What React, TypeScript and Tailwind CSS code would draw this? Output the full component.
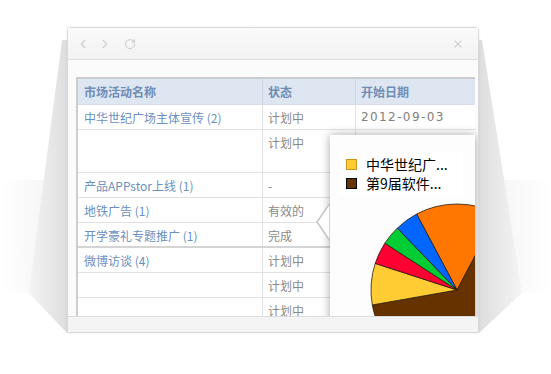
import { ChevronLeft, ChevronRight, RotateCw, X } from "lucide-react";

const rows = [
  { name: "中华世纪广场主体宣传 (2)", status: "计划中", date: "2012-09-03" },
  { name: "", status: "计划中", date: "", tall: true },
  { name: "产品APPstor上线 (1)", status: "-", date: "" },
  { name: "地铁广告 (1)", status: "有效的", date: "" },
  { name: "开学豪礼专题推广 (1)", status: "完成", date: "", thick: true },
  { name: "微博访谈 (4)", status: "计划中", date: "" },
  { name: "", status: "计划中", date: "" },
  { name: "", status: "计划中", date: "" },
];

const slices = [
  { color: "#ff7700", from: 332, to: 388 },
  { color: "#663300", from: 28, to: 260 },
  { color: "#ffcc33", from: 260, to: 288 },
  { color: "#ff0033", from: 288, to: 303 },
  { color: "#00cc33", from: 303, to: 316 },
  { color: "#0066ff", from: 316, to: 332 },
];

function slicePath(cx: number, cy: number, r: number, from: number, to: number) {
  const pt = (a: number) => {
    const rad = (a * Math.PI) / 180;
    return `${(cx + r * Math.sin(rad)).toFixed(2)} ${(cy - r * Math.cos(rad)).toFixed(2)}`;
  };
  const large = to - from > 180 ? 1 : 0;
  return `M ${cx} ${cy} L ${pt(from)} A ${r} ${r} 0 ${large} 1 ${pt(to)} Z`;
}

function Backdrop() {
  return (
    <svg className="absolute inset-0" width="551" height="374">
      <defs>
        <linearGradient id="shadeL" gradientUnits="userSpaceOnUse" x1="67" y1="0" x2="20" y2="0">
          <stop offset="0" stopColor="#dedede" />
          <stop offset="1" stopColor="#f9f9f9" />
        </linearGradient>
        <linearGradient id="shadeR" gradientUnits="userSpaceOnUse" x1="479" y1="0" x2="530" y2="0">
          <stop offset="0" stopColor="#dedede" />
          <stop offset="1" stopColor="#f9f9f9" />
        </linearGradient>
        <linearGradient id="floorL" gradientUnits="userSpaceOnUse" x1="67" y1="0" x2="0" y2="0">
          <stop offset="0" stopColor="#ececec" />
          <stop offset="1" stopColor="#ffffff" />
        </linearGradient>
        <linearGradient id="floorR" gradientUnits="userSpaceOnUse" x1="479" y1="0" x2="551" y2="0">
          <stop offset="0" stopColor="#ececec" />
          <stop offset="1" stopColor="#ffffff" />
        </linearGradient>
      </defs>
      <rect x="0" y="180" width="67" height="113" fill="url(#floorL)" opacity="0.7" />
      <rect x="479" y="180" width="72" height="113" fill="url(#floorR)" opacity="0.7" />
      <polygon points="62,40 29,293 67,333 67,40" fill="url(#shadeL)" />
      <polygon points="482,40 522,293 479,333 479,40" fill="url(#shadeR)" />
    </svg>
  );
}

function ChartPopover() {
  return (
    <div className="absolute left-[262px] top-[75px] h-[200px] w-[145px] bg-white shadow-[0_0_9px_rgba(0,0,0,0.35)]">
      <svg className="absolute left-[-14px] top-[68px]" width="16" height="38" viewBox="0 0 16 38">
        <polygon points="14,0 1,19 14,38" fill="#ffffff" stroke="#c4c4c4" strokeWidth="1.5" />
        <rect x="14" y="0" width="2" height="38" fill="#ffffff" />
      </svg>
      <div className="relative h-full w-full overflow-hidden bg-[#fdfdfd]">
        <svg className="absolute left-0 top-0" width="145" height="200">
          {slices.map((s) => (
            <path
              key={s.color}
              d={slicePath(127, 155, 86, s.from, s.to)}
              fill={s.color}
              stroke="#2a1a0a"
              strokeWidth="0.8"
              strokeLinejoin="round"
            />
          ))}
        </svg>
        <div className="relative ml-[10px] mt-[17px] flex h-[43px] w-[123px] flex-col justify-center gap-[4px] bg-white pl-[6px] font-['Noto_Sans_CJK_SC',sans-serif] text-[14px] leading-[15px] text-black">
          <div className="flex items-center gap-[9px]">
            <span className="h-[11px] w-[11px] border border-[#c9961a] bg-[#ffc933]" />
            <span>中华世纪广...</span>
          </div>
          <div className="flex items-center gap-[9px]">
            <span className="h-[11px] w-[11px] border border-black bg-[#663300]" />
            <span>第9届软件...</span>
          </div>
        </div>
      </div>
    </div>
  );
}

export default function App() {
  return (
    <div className="relative h-[374px] w-[551px] overflow-hidden bg-white">
      <Backdrop />
      <div className="relative ml-[67px] mt-[27px] flex h-[306px] w-[412px] flex-col rounded-t-[4px] border border-[#dadada] bg-white shadow-[0_0_3px_rgba(0,0,0,0.08)]">
        <div className="flex h-[32px] items-center border-b border-[#dedede] bg-gradient-to-b from-[#fafafa] to-[#f2f2f2] pl-[8px] pr-[14px] text-[#d2d2d2]">
          <ChevronLeft size={14} strokeWidth={2.5} />
          <ChevronRight size={14} strokeWidth={2.5} className="ml-[8px]" />
          <RotateCw size={12} strokeWidth={2.5} className="ml-[12px]" />
          <X size={12} strokeWidth={2.5} className="ml-auto" />
        </div>

        <div className="relative flex-1 overflow-hidden bg-[#fbfbfb] pl-[8px] pt-[17px]">
          <div className="w-[399px] border-l-2 border-t-2 border-[#cdcdcd] bg-white font-['Noto_Sans_CJK_SC',sans-serif] text-[12px] leading-none">
            <div className="flex h-[26px] items-center border-b border-[#d6dde8] bg-[#dde6f1] font-bold text-[#6f8db5]">
              <div className="w-[184px] pl-[6px]">市场活动名称</div>
              <div className="flex h-full w-[93px] items-center border-l border-[#cfd8e4] pl-[5px]">状态</div>
              <div className="flex h-full flex-1 items-center border-l border-[#cfd8e4] pl-[5px]">开始日期</div>
            </div>
            {rows.map((r, i) => (
              <div
                key={i}
                className={`flex ${r.tall ? "h-[43px]" : "h-[25px]"} ${r.thick ? "border-b-2 border-[#d4d4d4]" : "border-b border-[#e2e2e2]"}`}
              >
                <div className="w-[184px] pl-[6px] pt-[7px] text-[#6b90bf]">{r.name}</div>
                <div className="w-[93px] border-l border-[#e2e2e2] pl-[5px] pt-[7px] text-[#8a8a8a]">{r.status}</div>
                <div className="flex-1 border-l border-[#e2e2e2] pl-[5px] pt-[6px] font-['DejaVu_Sans',sans-serif] tracking-[1.4px] text-[#808080]">
                  {r.date}
                </div>
              </div>
            ))}
          </div>
          <ChartPopover />
        </div>

        <div className="h-[16px] border-t border-[#dcdcdc] bg-[#f4f4f4]" />
      </div>
    </div>
  );
}
